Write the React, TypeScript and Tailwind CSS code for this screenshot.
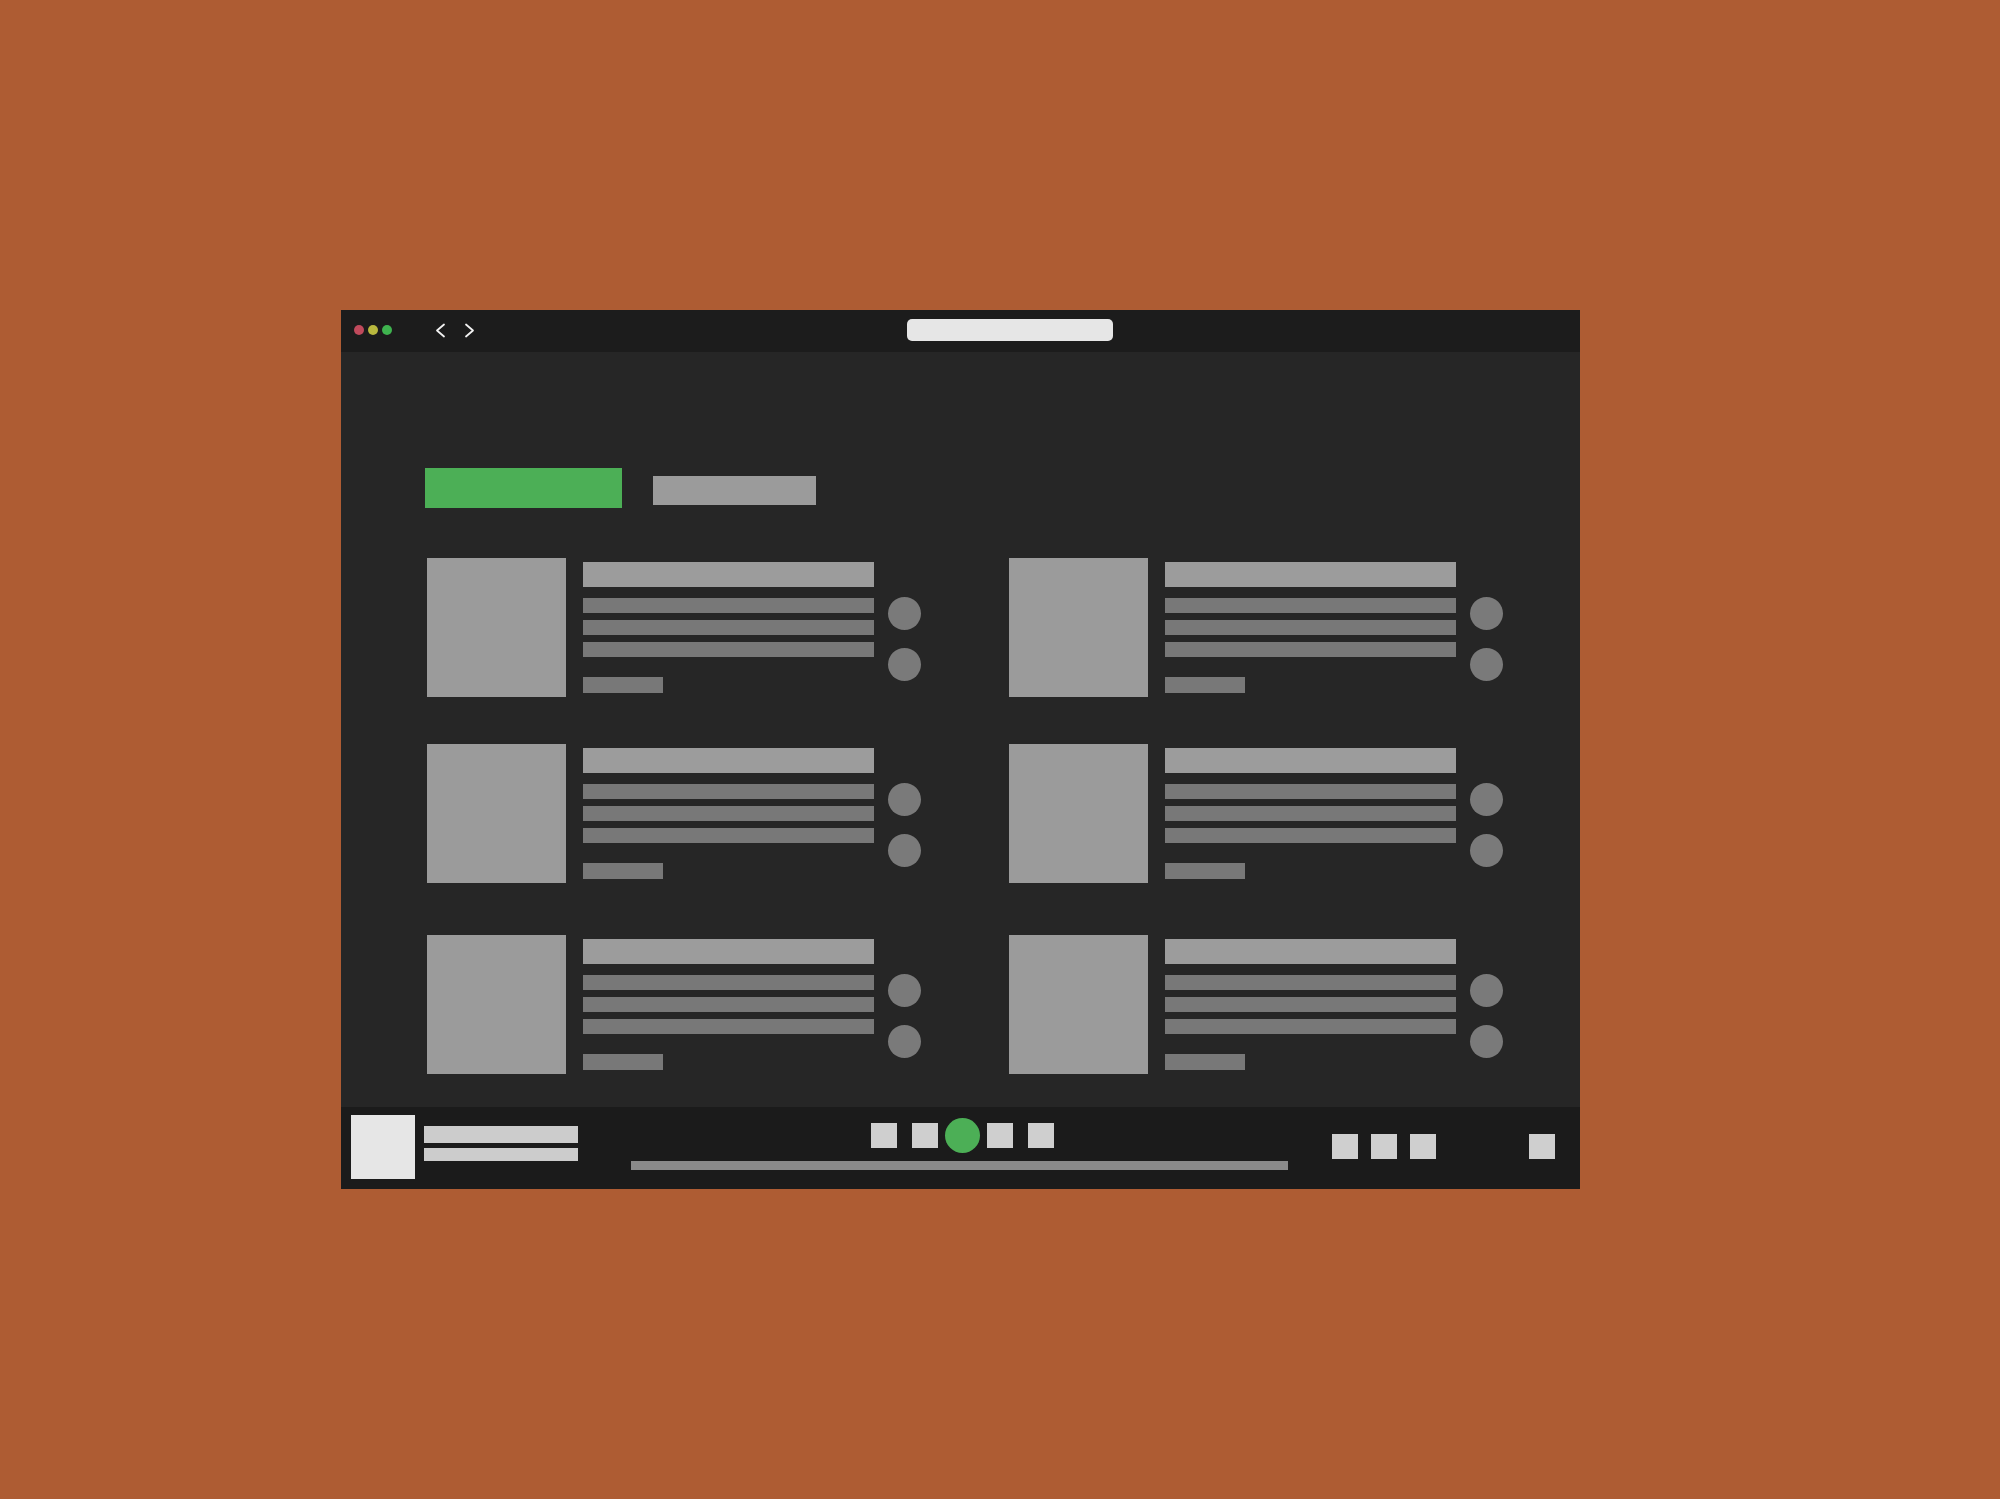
const rows = [
  { id: 1, space: "" },
  { id: 2, space: "mt-[47px]" },
  { id: 3, space: "mt-[52px]" },
];

function Card() {
  return (
    <div className="flex w-[495px]">
      {/* cover */}
      <div className="w-[139px] h-[139px] bg-[#9b9b9b] shrink-0" />
      {/* text lines */}
      <div className="ml-[17px] w-[291px] pt-[4px] flex flex-col">
        <div className="h-[25px] bg-[#9c9c9c]" />
        <div className="mt-[11px] flex flex-col gap-[7px]">
          <div className="h-[15px] bg-[#787878]" />
          <div className="h-[15px] bg-[#787878]" />
          <div className="h-[15px] bg-[#787878]" />
        </div>
        <div className="mt-[20px] w-[80px] h-[16px] bg-[#787878]" />
      </div>
      {/* actions */}
      <div className="ml-[14px] pt-[39px] flex flex-col gap-[18px]">
        <div className="w-[33px] h-[33px] rounded-full bg-[#7a7a7a]" />
        <div className="w-[33px] h-[33px] rounded-full bg-[#7a7a7a]" />
      </div>
    </div>
  );
}

function Chevron({ dir }: { dir: "left" | "right" }) {
  return (
    <svg width="12" height="15" viewBox="0 0 12 15" fill="none">
      <path
        d={dir === "left" ? "M10 1.5 L3 7.5 L10 13.5" : "M2 1.5 L9 7.5 L2 13.5"}
        stroke="#f2f2f2"
        strokeWidth="1.8"
        strokeLinecap="round"
        strokeLinejoin="round"
      />
    </svg>
  );
}

export default function App() {
  return (
    <div className="w-[2000px] h-[1499px] bg-[#ae5c33] pt-[310px] pl-[341px]">
      <div className="w-[1239px] h-[879px] flex flex-col">
        {/* Title bar */}
        <div className="h-[42px] bg-[#1c1c1c] flex items-center pl-[13px] pb-[2px]">
          <div className="flex gap-[4px]">
            <div className="w-[10px] h-[10px] rounded-full bg-[#c04a5c]" />
            <div className="w-[10px] h-[10px] rounded-full bg-[#b9b83e]" />
            <div className="w-[10px] h-[10px] rounded-full bg-[#3fb34f]" />
          </div>
          <div className="ml-[42px] flex items-center gap-[18px]">
            <Chevron dir="left" />
            <Chevron dir="right" />
          </div>
          <div className="ml-[431px] w-[206px] h-[22px] rounded-[5px] bg-[#e6e6e6]" />
        </div>

        {/* Content */}
        <div className="flex-1 bg-[#262626] pt-[116px] pl-[84px]">
          <div className="flex items-start">
            <div className="w-[197px] h-[40px] bg-[#4caf56]" />
            <div className="ml-[31px] mt-[8px] w-[163px] h-[29px] bg-[#9b9b9b]" />
          </div>

          <div className="mt-[50px] ml-[2px] flex flex-col">
            {rows.map((row) => (
              <div key={row.id} className={`flex gap-[87px] ${row.space}`}>
                <Card />
                <Card />
              </div>
            ))}
          </div>
        </div>

        {/* Player bar */}
        <div className="h-[82px] bg-[#1b1b1b] flex">
          <div className="w-[290px] flex items-start pl-[10px] pt-[8px]">
            <div className="w-[64px] h-[64px] bg-[#e6e6e6]" />
            <div className="ml-[9px] pt-[11px] flex flex-col gap-[5px]">
              <div className="w-[154px] h-[17px] bg-[#cccccc]" />
              <div className="w-[154px] h-[13px] bg-[#cccccc]" />
            </div>
          </div>

          <div className="w-[657px] pt-[11px] flex flex-col">
            <div className="h-[35px] pl-[240px] flex items-center">
              <div className="w-[26px] h-[25px] bg-[#cfcfcf]" />
              <div className="ml-[15px] w-[26px] h-[25px] bg-[#cfcfcf]" />
              <div className="ml-[7px] w-[35px] h-[35px] rounded-full bg-[#4caf56]" />
              <div className="ml-[7px] w-[26px] h-[25px] bg-[#cfcfcf]" />
              <div className="ml-[15px] w-[26px] h-[25px] bg-[#cfcfcf]" />
            </div>
            <div className="mt-[8px] h-[9px] bg-[#8a8a8a]" />
          </div>

          <div className="pl-[44px] pt-[27px] flex items-start">
            <div className="w-[26px] h-[25px] bg-[#cfcfcf]" />
            <div className="ml-[13px] w-[26px] h-[25px] bg-[#cfcfcf]" />
            <div className="ml-[13px] w-[26px] h-[25px] bg-[#cfcfcf]" />
            <div className="ml-[93px] w-[26px] h-[25px] bg-[#cfcfcf]" />
          </div>
        </div>
      </div>
    </div>
  );
}
